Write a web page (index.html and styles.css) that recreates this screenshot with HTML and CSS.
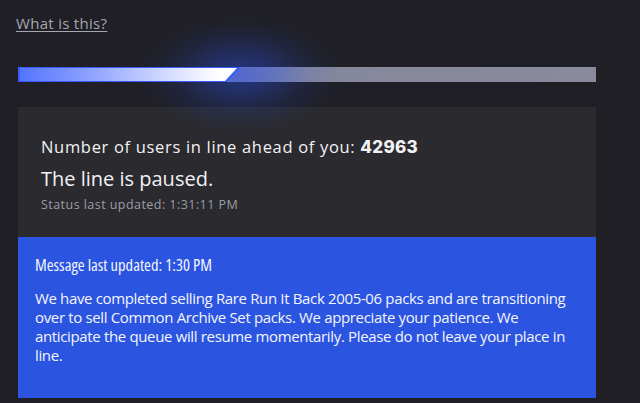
FILE: index.html
```html
<!DOCTYPE html>
<html lang="en">
<head>
<meta charset="utf-8">
<title>Queue</title>
<link rel="stylesheet" href="styles.css">
</head>
<body>
<main class="page">
  <a class="help-link" href="#">What is this?</a>
  <div class="progress">
    <div class="progress-track"></div>
    <div class="progress-glow"></div>
    <div class="progress-fill" style="width: 223px"></div>
  </div>
  <section class="status-card">
    <p class="ahead">Number of users in line ahead of you: <strong class="count">42963</strong></p>
    <p class="paused">The line is paused.</p>
    <p class="updated">Status last updated: 1:31:11 PM</p>
  </section>
  <section class="message">
    <h2 class="message-title">Message last updated: 1:30 PM</h2>
    <p class="message-body">We have completed selling Rare Run It Back 2005-06 packs and are transitioning over to sell Common Archive Set packs. We appreciate your patience. We anticipate the queue will resume momentarily. Please do not leave your place in line.</p>
  </section>
</main>
</body>
</html>
```
FILE: styles.css
```css
html, body {
  margin: 0;
  padding: 0;
  background: #1f1f25;
  height: 100%;
  overflow: hidden;
}

.page {
  display: flex;
  flex-direction: column;
  padding: 13px 44px 0 18px;
  font-family: "Open Sans", "Noto Sans", sans-serif;
  color: #f2f2f4;
}

.help-link {
  align-self: flex-start;
  margin-left: -2px;
  font-size: 15px;
  line-height: 20px;
  letter-spacing: 0.3px;
  color: #a6a6b0;
  text-decoration: underline;
  text-underline-offset: 2px;
}

.progress {
  position: relative;
  z-index: 1;
  margin-top: 34px;
  height: 15px;
}

.progress-track {
  position: absolute;
  inset: 0;
  background: linear-gradient(90deg, #767db4 0, #767db4 220px, #85879c 290px, #898a9c 100%);
}

.progress-glow {
  position: absolute;
  left: 117px;
  top: -53px;
  width: 210px;
  height: 120px;
  pointer-events: none;
  background: radial-gradient(ellipse 50% 50% at 50% 50%, rgba(40, 80, 235, 0.45) 0, rgba(40, 80, 235, 0.32) 30%, rgba(40, 80, 235, 0.13) 60%, rgba(40, 80, 235, 0.03) 85%, rgba(40, 80, 235, 0) 100%);
}

.progress-fill {
  position: absolute;
  left: 0;
  top: 0;
  height: 15px;
  background: #3a5cff;
  clip-path: polygon(0 0, 100% 0, calc(100% - 14px) 100%, 0 100%);
  filter: drop-shadow(0 0 3px rgba(60, 100, 255, 0.8));
}

.progress-fill::before {
  content: "";
  position: absolute;
  left: 2px;
  top: 1px;
  right: 4px;
  bottom: 1px;
  background: linear-gradient(90deg, #5474ff 0, #8ea2ff 70px, #dfe5ff 160px, #ffffff 200px);
  clip-path: polygon(0 0, 100% 0, calc(100% - 12px) 100%, 0 100%);
}

.status-card {
  margin-top: 25px;
  background: #2a2a2f;
  padding: 29px 23px 23px;
}

.status-card p {
  margin: 0;
}

.ahead {
  font-size: 16.5px;
  line-height: 22px;
  letter-spacing: 0.68px;
}

.count {
  font-family: "Inter", "Open Sans", sans-serif;
  font-weight: 800;
  font-size: 17px;
  letter-spacing: 0.3px;
}

.paused {
  margin-top: 8px !important;
  font-size: 20px;
  line-height: 26px;
}

.updated {
  margin-top: 4px !important;
  font-size: 12.5px;
  line-height: 18px;
  letter-spacing: 0.45px;
  color: #9d9da6;
}

.message {
  background: #2b54e0;
  padding: 17px 17px 33px;
  color: #f4f6ff;
}

.message-title {
  margin: 0;
  font-size: 16.5px;
  line-height: 22px;
  font-weight: 400;
  font-stretch: 75%;
}

.message-body {
  margin: 13px 0 0;
  font-size: 15px;
  line-height: 19px;
  letter-spacing: -0.35px;
}
```
